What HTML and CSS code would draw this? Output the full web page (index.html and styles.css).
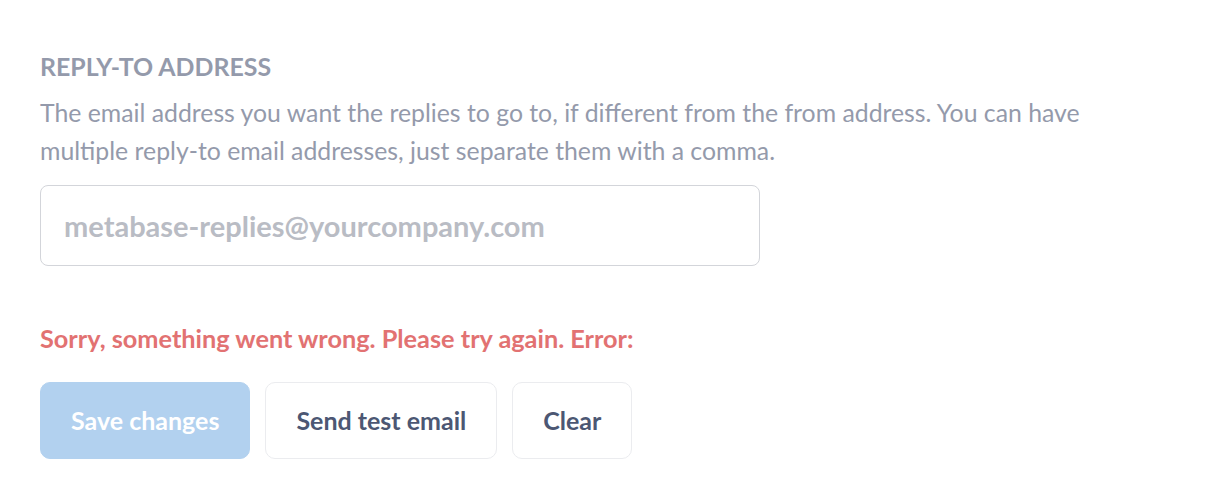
FILE: index.html
```html
<!DOCTYPE html>
<html lang="en">
<head>
<meta charset="utf-8">
<title>Email settings</title>
<link rel="stylesheet" href="styles.css">
</head>
<body>
<main class="settings">
  <section class="field">
    <h2 class="field-title">REPLY-TO ADDRESS</h2>
    <p class="field-desc">The email address you want the replies to go to, if different from the from address. You can have multiple reply-to email addresses, just separate them with a comma.</p>
    <input class="field-input" type="text" placeholder="metabase-replies@yourcompany.com">
  </section>
  <p class="form-error">Sorry, something went wrong. Please try again. Error:</p>
  <div class="actions">
    <button class="btn btn-primary" type="button">Save changes</button>
    <button class="btn" type="button">Send test email</button>
    <button class="btn" type="button">Clear</button>
  </div>
</main>
</body>
</html>
```

FILE: styles.css
```css
html, body {
  margin: 0;
  padding: 0;
  background: #ffffff;
}

body {
  font-family: Lato, "Open Sans", sans-serif;
  -webkit-font-smoothing: antialiased;
}

.settings {
  padding: 50px 40px 0 40px;
}

.field {
  display: flex;
  flex-direction: column;
  align-items: flex-start;
}

.field-title {
  margin: 0;
  font-size: 24.9px;
  line-height: 32px;
  font-weight: 700;
  color: #949aab;
}

.field-desc {
  margin: 12px 0 0 0;
  width: 1080px;
  font-size: 24.8px;
  line-height: 38px;
  font-weight: 400;
  color: #949aab;
}

.field-input {
  box-sizing: border-box;
  margin-top: 15px;
  width: 720px;
  height: 81px;
  padding: 0 23px;
  border: 1px solid #d3d5da;
  border-radius: 8px;
  font-family: inherit;
  font-size: 29px;
  font-weight: 700;
  color: #4c5773;
  background: #ffffff;
  outline: none;
}

.field-input::placeholder {
  color: #b9bcc4;
}

.form-error {
  margin: 56px 0 0 0;
  font-size: 25.3px;
  line-height: 32px;
  font-weight: 700;
  color: #e27272;
}

.actions {
  display: flex;
  gap: 15px;
  margin-top: 28px;
}

.btn {
  box-sizing: border-box;
  height: 77px;
  padding: 0 30px 2px 30px;
  border: 1px solid #ebecef;
  border-radius: 10px;
  background: #ffffff;
  font-family: inherit;
  font-size: 25px;
  font-weight: 700;
  color: #4c5773;
  cursor: pointer;
}

.btn-primary {
  background: #b2d1ef;
  border-color: #b2d1ef;
  color: #ffffff;
}
```
